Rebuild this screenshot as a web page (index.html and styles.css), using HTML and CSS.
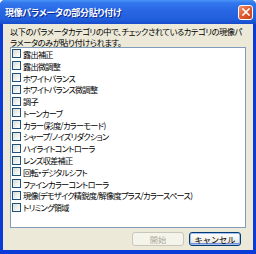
FILE: index.html
```html
<!DOCTYPE html>
<html>

<head>
    <meta charset="UTF-8" />
    <title>現像パラメータの部分貼り付け</title>
    <link rel="stylesheet" href="styles.css">
</head>
<body>
    <div class="window">
        <!-- タイトルバー -->
        <div class="titlebar">
            <span class="title">現像パラメータの部分貼り付け</span>
            <span class="close">
                <svg width="8" height="8" viewBox="0 0 8 8">
                    <path d="M1 1L7 7M7 1L1 7" stroke="#fff" stroke-width="1.6" stroke-linecap="square" />
                </svg>
            </span>
        </div>

        <div class="body">
            <div class="intro">
                <div>以下のパラメータカテゴリの中で、チェックされているカテゴリの現像パ</div>
                <div>ラメータのみが貼り付けられます。</div>
            </div>

            <ul class="list">
                <li><i class="box"></i>露出補正</li>
                <li><i class="box"></i>露出微調整</li>
                <li><i class="box"></i>ホワイトバランス</li>
                <li><i class="box"></i>ホワイトバランス微調整</li>
                <li><i class="box"></i>調子</li>
                <li><i class="box"></i>トーンカーブ</li>
                <li><i class="box"></i>カラー(彩度/カラーモード)</li>
                <li><i class="box"></i>シャープ/ノイズリダクション</li>
                <li><i class="box"></i>ハイライトコントローラ</li>
                <li><i class="box"></i>レンズ収差補正</li>
                <li><i class="box"></i>回転・デジタルシフト</li>
                <li><i class="box"></i>ファインカラーコントローラ</li>
                <li><i class="box"></i>現像(デモザイク精鋭度/解像度プラス/カラースペース)</li>
                <li><i class="box"></i>トリミング領域</li>
            </ul>

            <div class="buttons">
                <button class="btn" disabled>開始</button>
                <button class="btn default">キャンセル</button>
            </div>
        </div>
    </div>
</body>

</html>
```

FILE: styles.css
```css
*{
    margin: 0;
    padding: 0;
    box-sizing: border-box;
}

html, body{
    width: 256px;
    height: 254px;
    overflow: hidden;
}

body{
    font-family: "Noto Sans CJK JP", "Liberation Sans", sans-serif;
    font-size: 8.2px;
    font-feature-settings: "palt";
}

.window{
    width: 256px;
    height: 254px;
    background-color: #0b3bd6;
    border-radius: 5px 5px 0 0;
    overflow: hidden;
}

/* タイトルバー */
.titlebar{
    height: 24px;
    display: flex;
    align-items: center;
    justify-content: space-between;
    padding: 0 3px 0 5px;
    background: linear-gradient(#4a94f8 0, #3277ec 3px, #2866e4 45%, #215fdd 80%, #174ccb 100%);
}

.title{
    color: #fff;
    font-weight: bold;
    font-size: 9px;
    letter-spacing: -0.3px;
    text-shadow: 1px 1px 0 #0a2a94;
    white-space: nowrap;
}

.close{
    width: 15px;
    height: 15px;
    display: flex;
    align-items: center;
    justify-content: center;
    border: 1px solid #fff;
    border-radius: 3px;
    background: linear-gradient(135deg, #f09070 0, #e05a30 50%, #c5401a 100%);
}

/* 本体 */
.body{
    width: 250px;
    height: 226px;
    margin: 0 3px;
    background-color: #ece9d8;
    padding: 2px 10px 0 7px;
}

.intro{
    height: 21px;
    line-height: 10.5px;
    color: #000;
    white-space: nowrap;
    letter-spacing: -0.4px;
}

.list{
    list-style: none;
    height: 181px;
    width: 236px;
    background-color: #fff;
    border: 1px solid #7f9db9;
}

.list li{
    height: 11.8px;
    display: flex;
    align-items: center;
    white-space: nowrap;
    letter-spacing: -0.75px;
    padding-left: 1px;
}

.box{
    width: 9px;
    height: 9px;
    margin-right: 2px;
    border: 1px solid #1c5180;
    background: linear-gradient(135deg, #dcdcd5 0, #f2f2ee 60%, #fff 100%);
    flex: none;
}

/* ボタン */
.buttons{
    display: flex;
    justify-content: flex-end;
    gap: 5px;
    margin: 4px 2px 0 0;
}

.btn{
    width: 52px;
    height: 14px;
    font-family: inherit;
    font-size: 8.2px;
    border: 1px solid #003c74;
    border-radius: 3px;
    background: linear-gradient(#ffffff 0, #f4f3ee 50%, #e3e0d6 100%);
    color: #000;
    line-height: 11px;
}

.btn:disabled{
    border-color: #c9c7ba;
    background: #f5f4ea;
    color: #aca899;
}

.btn.default{
    box-shadow: inset 0 0 0 1px #a2bff0, inset 0 -1px 0 1px #6f8fdc;
}
```
